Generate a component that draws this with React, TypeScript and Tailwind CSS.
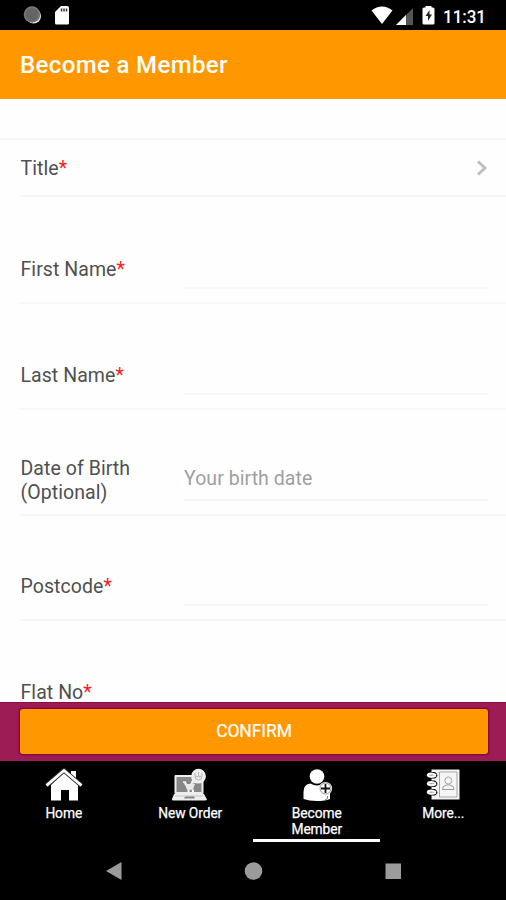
import type { ReactNode } from "react";

function Required() {
  return <span className="text-[#ff1a1a]">*</span>;
}

type FieldProps = {
  label: ReactNode;
  height: string;
  labelPadding?: string;
  children?: ReactNode;
  placeholder?: string;
};

function Field({ label, height, labelPadding = "pb-[20px]", children, placeholder }: FieldProps) {
  return (
    <div className={`${height} ml-5 flex shrink-0 border-b-2 border-[#f7f7f7]`}>
      <div className={`${labelPadding} flex w-[164px] shrink-0 flex-col justify-end pl-[0.5px] text-[19.5px] leading-6 tracking-[0.06px] text-[#505050]`}>
        <div>{label}{children}</div>
      </div>
      <div className="mr-[18px] mb-[13px] flex flex-1 items-end border-b-2 border-[#f8f8f8] pb-[8px] text-[19.5px] leading-6 tracking-[0.06px] text-[#a0a0a0]">
        {placeholder}
      </div>
    </div>
  );
}

function StatusBar() {
  return (
    <div className="flex h-[30px] shrink-0 items-center bg-black">
      <svg width="506" height="30" viewBox="0 0 506 30">
        <circle cx="33.500" cy="16" r="7.500" fill="#eee" />
        <circle cx="32" cy="14.500" r="8.300" fill="#777" />
        <circle cx="32" cy="14.500" r="6.500" fill="#656565" />
        <path d="M61 6h6q2 0 2 2v15q0 1.500-1.500 1.500h-11Q55 24.500 55 23V12z" fill="#fff" />
        <path d="M61.500 8.500v3M64 8.500v3M66.500 8.500v3" stroke="#333" strokeWidth="1.500" />
        <path d="M371.500 10.500Q382 2.500 392.500 10.500L382 24z" fill="#fff" />
        <path d="M413 8v17h-17z" fill="#555" />
        <path d="M406 15v10h-10z" fill="#fff" />
        <path d="M425.500 7.500V6h6v1.500h1.500q1.500 0 1.500 1.500v14q0 1.500-1.500 1.500h-9q-1.500 0-1.500-1.500V9q0-1.500 1.500-1.500z" fill="#fff" />
        <path d="M429.500 10l-4 6h2.500v5l4-6.500h-2.500z" fill="#222" />
        <text x="443" y="22.500" fontFamily="Roboto, sans-serif" fontSize="18.500" fontWeight="500" fill="#fff" textLength="43" lengthAdjust="spacingAndGlyphs">11:31</text>
      </svg>
    </div>
  );
}

function HomeIcon() {
  return (
    <svg width="38" height="34" viewBox="0 0 38 34">
      <path d="M26 3h5v11h-5z" fill="#fff" />
      <path d="M19 4L33 17v15.500h-9V22h-8v10.500H6V17z" fill="#fff" />
      <path d="M1.500 17.500L19 2.500l17.500 15" fill="none" stroke="#333" strokeWidth="4.600" />
      <path d="M1.500 17.500L19 2.500l17.500 15" fill="none" stroke="#fff" strokeWidth="2.900" strokeLinejoin="round" />
    </svg>
  );
}

function OrderIcon() {
  return (
    <svg width="38" height="34" viewBox="0 0 38 34">
      <rect x="3.500" y="7" width="29" height="19" rx="1" fill="#eee" />
      <rect x="5.500" y="9" width="25" height="15" fill="#888" />
      <path d="M3 26h30l3 5.500q-.5 1-2 1H2.500q-2 0-1.500-1.500z" fill="#eee" />
      <path d="M4 28h28" stroke="#c4c4c4" />
      <path d="M14 28.500h9l1 2H13z" fill="#888" />
      <path d="M12 14h2.500l1 2h8.500l-2 5h-5.500z" fill="#e8e8e8" />
      <path d="M12 14h2.500l2 7h6" fill="none" stroke="#eee" strokeWidth="1.300" />
      <circle cx="17.500" cy="23" r="1.200" fill="#fff" />
      <circle cx="22" cy="23" r="1.200" fill="#fff" />
      <path d="M22 10l-3 6.500 9-2.500z" fill="#eee" />
      <circle cx="27.500" cy="8.200" r="7.400" fill="#eee" />
      <path d="M24 5v3q0 4 3.500 4t3.500-4V5M27.500 4v4M25 8q2.500 2 5 0" fill="none" stroke="#b2b2b2" />
    </svg>
  );
}

function MemberIcon() {
  return (
    <svg width="38" height="34" viewBox="0 0 38 34">
      <circle cx="19" cy="8.500" r="7.300" fill="#fff" />
      <path d="M5.500 31V24q0-8 7-8.500 6.500 4 13 0 6.500.5 6.500 8.500v7q-5 2-13 2t-13.500-2z" fill="#fff" />
      <circle cx="27.500" cy="20.500" r="6.600" fill="#fff" />
      <circle cx="27.500" cy="20.500" r="5.500" fill="none" stroke="#777" strokeWidth=".8" />
      <path d="M27.500 16v9M23 20.500h9" stroke="#111" strokeWidth="1.800" />
      <path d="M27 32q4-1 2.500-4" fill="none" stroke="#777" />
    </svg>
  );
}

function MoreIcon() {
  return (
    <svg width="38" height="34" viewBox="0 0 38 34">
      <path d="M7.500 1.500h28v30h-28z" fill="#f5f5f5" />
      <path d="M15.500 4h17.500v25H15.500z" fill="none" stroke="#a5a5a5" />
      <circle cx="24.300" cy="12.500" r="3.500" fill="none" stroke="#aaa" />
      <path d="M18.500 21.500q0-4 4-4.500h3.500q4 .5 4 4.500z" fill="none" stroke="#999" />
      {[7.5, 16, 24.5].map((y) => (
        <g key={y}>
          <path d={`M6 ${y - 3.5}h5q5 3.500 0 6.500H6z`} fill="#111" />
          <path d={`M12 ${y - 0.5}q-4-2.500-7.500-1-2 1.500 1 2.500 3.500 1 6.500-1`} fill="#999" stroke="#fff" strokeWidth="2" />
        </g>
      ))}
    </svg>
  );
}

function Tab({ icon, children, active = false }: { icon: ReactNode; children: ReactNode; active?: boolean }) {
  return (
    <div className={`flex h-[81px] flex-1 flex-col items-center border-b-[3px] pt-[7px] pl-px ${active ? "border-white" : "border-transparent"}`}>
      {icon}
      <div className="mt-[3px] text-center text-[13.8px] leading-4 tracking-[-0.1px] text-white [-webkit-text-stroke:0.25px_white]">{children}</div>
    </div>
  );
}

export default function App() {
  return (
    <div className="flex h-[900px] w-[506px] flex-col overflow-hidden bg-black font-['Roboto',sans-serif]">
      <StatusBar />
      <header className="flex h-[69px] shrink-0 items-center bg-[#ff9800] pl-[20px] text-[24px] font-medium text-white">
        <h1 className="tracking-[0.37px]">Become a Member</h1>
      </header>
      <main className="flex h-[603px] shrink-0 flex-col overflow-hidden bg-[#fefefe]">
        <div className="h-[41px] shrink-0 border-b-2 border-[#f7f7f7]" />
        <div className="ml-5 flex h-[57px] shrink-0 items-center justify-between border-b-2 border-[#f7f7f7] pr-[17px] pl-[0.5px] text-[19.5px] tracking-[0.06px] text-[#505050]">
          <div className="pt-[3px]">Title<Required /></div>
          <svg width="14" height="18" viewBox="0 0 14 18">
            <path d="M3 2.500L10 9l-7 6.500" fill="none" stroke="#bdbdbd" strokeWidth="2.800" />
          </svg>
        </div>
        <Field height="h-[107px]" label="First Name"><Required /></Field>
        <Field height="h-[106px]" label="Last Name"><Required /></Field>
        <Field height="h-[106px]" labelPadding="pb-[9px]" label={<>Date of Birth<br />(Optional)</>} placeholder="Your birth date" />
        <Field height="h-[105px]" label="Postcode"><Required /></Field>
        <Field height="h-[106px]" label="Flat No"><Required /></Field>
      </main>
      <div className="h-[59px] shrink-0 border-t border-[#8b0c3d] bg-[#9d1c56] pt-[6px] pr-[18px] pl-5">
        <button className="h-[45px] w-full rounded-[3px] bg-[#ff9800] text-[17.5px] tracking-[-0.1px] text-white shadow-[0_0_2px_1px_#850035] [-webkit-text-stroke:0.2px_white]">CONFIRM</button>
      </div>
      <nav className="flex h-[81px] shrink-0">
        <Tab icon={<HomeIcon />}>Home</Tab>
        <Tab icon={<OrderIcon />}>New Order</Tab>
        <Tab icon={<MemberIcon />} active>Become<br />Member</Tab>
        <Tab icon={<MoreIcon />}>More...</Tab>
      </nav>
      <div className="h-[58px] shrink-0">
        <svg width="506" height="58" viewBox="0 842 506 58">
          <path d="M106 871l15.500-9v18z" fill="#9b9b9b" />
          <circle cx="253.500" cy="871" r="8.800" fill="#9b9b9b" />
          <rect x="385.500" y="863.500" width="15.500" height="15.500" fill="#9b9b9b" />
        </svg>
      </div>
    </div>
  );
}
